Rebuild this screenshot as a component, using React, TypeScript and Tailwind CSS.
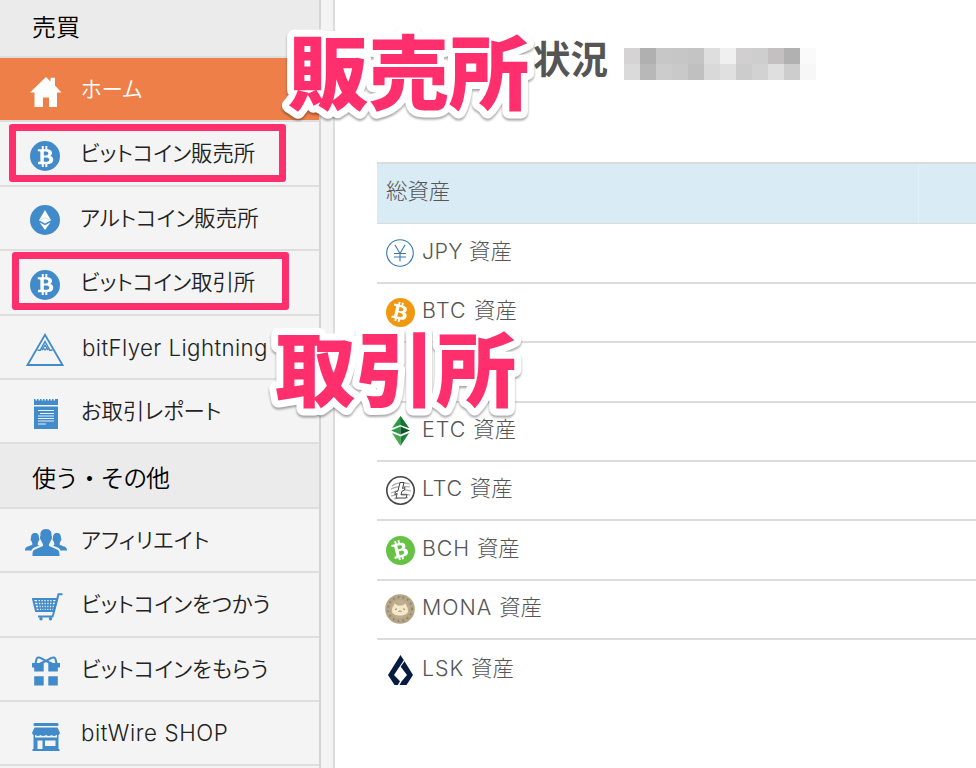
import React from 'react';
import { FaBtc } from 'react-icons/fa';

const JP = "font-['Noto_Sans_CJK_JP','Noto_Sans',sans-serif]";
const LATIN = "font-['Inter','Noto_Sans_CJK_JP',sans-serif]";

const HomeIcon = () => (
  <svg width="32" height="30" viewBox="0 0 32 30" fill="#fff" className="ml-[2px]">
    <path d="M16 0 L20.5 4.5 V0.8 H25 V8.5 L31.5 15.5 H27 V30 H19 V20.5 H13 V30 H4.500 V15.500 H0 Z" />
  </svg>
);

const BitcoinIcon = () => (
  <span className="flex size-[30px] items-center justify-center rounded-full bg-[#428bca] text-white">
    <FaBtc size={21} />
  </span>
);

const EtherIcon = () => (
  <svg width="30" height="30" viewBox="0 0 30 30">
    <circle cx="15" cy="15" r="15" fill="#428bca" />
    <path d="M15 5 L21 15.3 L15 18.600 L9 15.300 Z M9.500 17.200 L15 20.300 L20.500 17.200 L15 25 Z" fill="#fff" />
    <path d="M9.500 15 L15 12.800 L20.500 15" fill="none" stroke="#c3dbef" strokeWidth="0.8" />
  </svg>
);

const LightningIcon = () => (
  <svg width="38" height="33" viewBox="0 0 38 33" fill="none" stroke="#428bca" strokeWidth="1.8">
    <path d="M19 1.800 L36.500 32 H1.500 Z" />
    <path d="M11.500 17.200 H14.300 L19 8.500 L23.700 17.200 H26.500" strokeWidth="1.500" />
    <path d="M15.800 17 L19 12 L22.200 17 L20.300 15.500 L19 17 L17.700 15.500 Z" strokeWidth="1.200" />
  </svg>
);

const ReportIcon = () => (
  <svg width="24" height="30" viewBox="0 0 24 30" className="ml-[2px]">
    <path d="M0 0 H1.500 V1.500 H3 V0 H4.500 V1.500 H6 V0 H7.500 V1.500 H9 V0 H10.500 V1.500 H12 V0 H13.500 V1.500 H15 V0 H16.500 V1.500 H18 V0 H19.500 V1.500 H21 V0 H24 V6 H0 Z M0 7.500 H24 V30 H0 Z" fill="#428bca" />
    <path d="M4 11.500 H20 M6 14.500 H20 M4 17 H20 M4 19.500 H20 M4 22 H20 M4 25 H12" stroke="#e6f0f8" strokeWidth="1.200" />
  </svg>
);

const UsersIcon = () => (
  <svg width="42" height="27" viewBox="0 0 42 27" fill="#428bca" className="ml-px">
    <path d="M21 0 C25.500 0 27 3 26.500 7 C27.800 8 26.500 11 25.800 11.500 C25 14 23.500 15 24 17 L31 20 C34 21.200 34.500 22 34.500 27 H7.500 C7.500 22 8 21.200 11 20 L18 17 C18.500 15 17 14 16.200 11.500 C15.500 11 14.200 8 15.500 7 C15 3 16.500 0 21 0Z" />
    <path d="M10 4 C13 4 14 6 14 9 C15 10 14 12 13.500 12 C13 14 12 15 13 16 L14 16.500 C10 18.500 7 19 6.500 21.500 H0 C0 18 2 17.800 7 16 C8 15 7 14 6.500 12 C6 12 5 10 6 9 C6 6 7 4 10 4Z" />
    <path d="M32 4 C29 4 28 6 28 9 C27 10 28 12 28.500 12 C29 14 30 15 29 16 L28 16.500 C32 18.500 35 19 35.500 21.500 H42 C42 18 40 17.800 35 16 C34 15 35 14 35.500 12 C36 12 37 10 36 9 C36 6 35 4 32 4Z" />
  </svg>
);

const CartIcon = () => (
  <svg width="31" height="28" viewBox="0 0 31 28" fill="none" stroke="#428bca" className="ml-[4px]">
    <path d="M30.500 1.200 H26.500 L21.500 20.500 L20.500 23.500 H6" strokeWidth="2" />
    <path d="M1 6 H25 L21.500 18 H4 Z" strokeWidth="2" />
    <path d="M5.500 6 L7.500 18 M8.500 6 L10 18 M11.500 6 L12.200 18 M14.500 6 V18 M17.500 6 L17 18 M20.500 6 L19.500 18 M2 9 H24 M3 12 H23 M3.500 15 H22" strokeWidth="1.500" />
    <circle cx="9" cy="25.700" r="1.700" fill="#428bca" stroke="none" />
    <circle cx="18.500" cy="25.700" r="1.700" fill="#428bca" stroke="none" />
  </svg>
);

const GiftIcon = () => (
  <svg width="28" height="30" viewBox="0 0 28 30" fill="#428bca" className="ml-[2px]">
    <path d="M0 7 H28 V11.500 H25.800 V15.500 H16.300 V7 H11.700 V15.500 H2.200 V11.500 H0 Z M2.200 20.300 H11.700 V29.500 H2.200 Z M16.300 20.300 H25.800 V29.500 H16.300 Z" />
    <path d="M3.500 7.500 L4.500 3 C5 1.500 7 1 8.500 2 L14 5 L19.500 2 C21 1 23 1.500 23.500 3 L24.500 7.500 M8 7.500 L14 5 L20 7.500" fill="none" stroke="#428bca" strokeWidth="2" />
  </svg>
);

const ShopIcon = () => (
  <svg width="28" height="28" viewBox="0 0 28 28" fill="#428bca" className="ml-px mt-[2px]">
    <path d="M2.500 0 H25.500 Q26.500 0 26.500 1.500 Q26.500 3 25.500 3 H2.500 Q1.500 3 1.500 1.500 Q1.500 0 2.500 0Z" />
    <path d="M2.500 4.500 H25.500 L28 10 Q27 13 24.500 12 Q22 14 19.500 12 Q17 14 14 12 Q11 14 8.500 12 Q6 14 3.500 12 Q1 13 0 10Z" />
    <path fillRule="evenodd" d="M1.500 12 H3 V14.500 H25 V12 H26.500 V26 H27.500 V28 H.5 V26 H1.500Z M5.500 17.500 V26 H10.500 V17.500Z M13 17.500 V23 H23.500 V17.500Z" />
  </svg>
);

const YenCoin = () => (
  <svg width="28" height="28" viewBox="0 0 28 28" fill="none" stroke="#3b78b5" strokeWidth="1.100">
    <circle cx="14" cy="14" r="13.300" />
    <path d="M9 6 L14 14.500 L19 6 M14 14.500 V22.500 M8 14.500 H20 M8 18 H20" />
  </svg>
);

const EtcCoin = () => (
  <svg width="29" height="30" viewBox="0 0 29 30">
    <path d="M14.500 0 L23 12 L14.500 9 L6 12Z" fill="#2c9b45" />
    <path d="M14.500 0 L23 12 L14.500 9Z" fill="#157532" />
    <path d="M5 14.500 L14.500 10.500 V18.500Z" fill="#2c9b45" />
    <path d="M24 14.500 L14.500 10.500 V18.500Z" fill="#0b5529" />
    <path d="M6 17 L14.500 20.500 V30Z" fill="#43ab49" />
    <path d="M23 17 L14.500 20.500 V30Z" fill="#168239" />
  </svg>
);

const LtcCoin = () => (
  <svg width="29" height="29" viewBox="0 0 29 29" fill="none" stroke="#444">
    <circle cx="14.500" cy="14.500" r="13.700" strokeWidth="1.600" />
    <path d="M6 10 Q12 5 24 8 M5 13 Q12 9 24 11 M5 17 Q16 12 25 15 M5 20 Q16 17 24 19 M8 23 Q16 20 22 22" stroke="#aaa" strokeWidth="1.200" />
    <path d="M14 6.500 H18 L16.500 12.500 L19 11.500 L18.500 14 L15.800 15.500 L15 18.800 H21 L20.200 22 H10 L11.200 17.500 L8.800 18.500 L9.400 16 L12 14.800Z" fill="#fff" strokeWidth="1" />
  </svg>
);

const MonaCoin = () => (
  <svg width="30" height="30" viewBox="0 0 30 30">
    <circle cx="15" cy="15" r="14.800" fill="#b3a587" />
    <circle cx="15" cy="15" r="12" fill="none" stroke="#8f8360" strokeWidth="2" strokeDasharray="1.500 3.400" />
    <circle cx="15" cy="15" r="9.500" fill="#bdae8d" />
    <path d="M7 17 C7 13 9 12 9.500 9.500 L12.500 11.500 H17.500 L20.500 9.500 C21 12 23 13 23 17 C23 20 19 21.500 15 21.500 C11 21.500 7 20 7 17Z" fill="#f7e8ca" />
    <path d="M10 15.500 L12 14.800 M18 14.800 L20 15.500 M13.500 17.500 L15 16.800 L16.500 17.500" stroke="#8d8065" fill="none" />
  </svg>
);

const LiskCoin = () => (
  <svg width="25" height="30" viewBox="0 0 25 30" fill="#061b40">
    <path d="M12.500 0 L15.800 5.200 L6 20 L12 26.200 L9.800 30 H6.500 L0 20Z" />
    <path d="M16.500 6.300 L25 20 L18.500 30 H11.500 L13.500 26.500 L19 20 L12.700 11.800Z" />
  </svg>
);

const Coin = ({ color, tilt }: { color: string; tilt: string }) => (
  <span className={`flex size-[29px] items-center justify-center rounded-full text-white ${color}`}>
    <FaBtc size={20} className={tilt} />
  </span>
);

type Item = { icon: React.ReactNode; label: string; style?: string; active?: boolean; mark?: string };

const trade: Item[] = [
  { icon: <HomeIcon />, label: 'ホーム', style: 'text-[21.4px]', active: true },
  { icon: <BitcoinIcon />, label: 'ビットコイン販売所', style: 'text-[21.4px] -ml-px', mark: 'left-[9px] top-[2px]' },
  { icon: <EtherIcon />, label: 'アルトコイン販売所', style: 'text-[21.4px] -ml-px' },
  { icon: <BitcoinIcon />, label: 'ビットコイン取引所', style: 'text-[21.4px] -ml-px', mark: 'left-[12px] top-[1px]' },
  { icon: <LightningIcon />, label: 'bitFlyer Lightning', style: `${LATIN} text-[22.3px] tracking-[0.4px] ml-px mt-[5px]` },
  { icon: <ReportIcon />, label: 'お取引レポート', style: 'text-[21.4px]' },
];
const others: Item[] = [
  { icon: <UsersIcon />, label: 'アフィリエイト', style: 'text-[21.4px] tracking-[0.2px]' },
  { icon: <CartIcon />, label: 'ビットコインをつかう', style: 'text-[21.4px]' },
  { icon: <GiftIcon />, label: 'ビットコインをもらう', style: 'text-[21.4px]' },
  { icon: <ShopIcon />, label: 'bitWire SHOP', style: `${LATIN} text-[22.3px] tracking-[0.6px] mt-[4px]` },
];

const NavRow = ({ icon, label, style = '', active, mark }: Item) => (
  <li
    className={`relative flex h-[64.4px] shrink-0 items-center border-b-2 ${
      active ? 'border-[#ddd] bg-[#ee7f49] text-white' : 'border-[#dedede] bg-[#f4f4f4] text-[#222]'
    }`}
  >
    <span className="ml-[22px] mt-[5px] flex w-[46px] items-center justify-center">{icon}</span>
    <span className="-mt-[3px] pl-[13px]">
      <span className={`block whitespace-nowrap font-[350] leading-none [font-feature-settings:'palt'] ${style}`}>{label}</span>
    </span>
    {mark && <span className={`absolute h-[58px] w-[277px] rounded-[3px] border-[7px] border-[#ff2f6e] ${mark}`} />}
  </li>
);

const NavTitle = ({ children, style = '' }: { children: string; style?: string }) => (
  <h2 className={`flex h-[64.4px] shrink-0 items-center border-b-2 border-[#dedede] bg-[#ebebeb] pl-8 pt-[2px] text-[24px] font-[350] leading-none text-black ${style}`}>
    {children}
  </h2>
);

const assets = [
  { icon: <YenCoin />, code: 'JPY', track: 'tracking-[0.3px]' },
  { icon: <Coin color="bg-[#f09910]" tilt="rotate-[13deg]" />, code: 'BTC', track: 'tracking-[1.2px]' },
  { icon: null, code: '', track: '' },
  { icon: <EtcCoin />, code: 'ETC', track: 'tracking-[1px]' },
  { icon: <LtcCoin />, code: 'LTC', track: 'tracking-[0.8px]' },
  { icon: <Coin color="bg-[#66c244]" tilt="-rotate-[14deg]" />, code: 'BCH', track: 'tracking-[0.9px]' },
  { icon: <MonaCoin />, code: 'MONA', track: 'tracking-[1px]' },
  { icon: <LiskCoin />, code: 'LSK', track: 'tracking-[0.9px]' },
];

/* Sticker-style lettering with a rounded white outline laid over the page. */
const Callout = ({ children, place }: { children: string; place: string }) => (
  <svg width="260" height="104" className={`absolute overflow-visible [filter:drop-shadow(0_2px_1px_rgba(0,0,0,0.35))] ${place}`}>
    <text
      x="10"
      y="82"
      fontSize="80.4"
      fill="#ff2f6e"
      stroke="#fff"
      strokeWidth="14"
      strokeLinejoin="round"
      paintOrder="stroke"
      className="font-black"
    >
      {children}
    </text>
  </svg>
);

const mosaic = [
  ['#d5d3d4', '#b0b0b0', '#c7c7c7', '#c6c6c6', '#c4c4c4', '#dedede', '#f0f0f0', '#d1cfd0', '#cecece', '#c4c0c1', '#b1b1b1', '#fafafa'],
  ['#dadada', '#b8b8b8', '#cccccc', '#c9c9c9', '#c0c0c0', '#d9d9d9', '#e0e0e0', '#cccccc', '#d2d2d2', '#dfdfdf', '#cdcdcd', '#f7f7f7'],
];

export default function App() {
  return (
    <div className={`relative flex h-[768px] w-[976px] overflow-hidden bg-white ${JP}`}>
      <aside className="flex h-full w-[321px] shrink-0 flex-col border-r-2 border-[#d5d5d5] bg-[#f4f4f4]">
        <div className="-mt-[6.4px] flex flex-col">
          <NavTitle>売買</NavTitle>
          <ul>{trade.map((t, i) => <NavRow key={i} {...t} />)}</ul>
          <NavTitle style="tracking-[-1.2px]">使う・その他</NavTitle>
          <ul>{others.map((t, i) => <NavRow key={i} {...t} />)}</ul>
        </div>
      </aside>
      <div className="w-[14px] shrink-0 border-r-2 border-[#dcdcdc] bg-[#f4f4f4]" />

      <main className="min-w-0 flex-1 pl-[42px]">
        <header className="flex h-[162px] pl-[156px] pt-[37px]">
          <h1 className="text-[37.5px] font-bold leading-[40px] text-[#555]">状況</h1>
          <div className="ml-[16px] mt-[11px] h-[32px]">
            {mosaic.map((row, i) => (
              <div key={i} className="flex">
                {row.map((c, j) => <span key={j} className="size-4" style={{ backgroundColor: c }} />)}
              </div>
            ))}
          </div>
        </header>
        <section className="text-[21.4px] font-light text-[#555]">
          <div className="flex h-[62.4px] border-b border-t-2 border-[#d8dcdd] bg-[#d9ecf5]">
            <div className="w-[542px] border-r border-[#e2f0f7] pl-[9px] pt-[14px] leading-[24px]">総資産</div>
          </div>
          {assets.map((a, i) => (
            <div key={i} className={`flex h-[59.4px] items-center pl-[8px] ${i < 7 ? 'border-b-2 border-[#dcdcdc]' : ''}`}>
              <span className="flex w-[30px] justify-center">{a.icon}</span>
              {a.code && (
                <span className="-mt-[5px] ml-[7px] whitespace-pre leading-none">
                  <span className={`${LATIN} ${a.track}`}>{a.code} </span>資産
                </span>
              )}
            </div>
          ))}
        </section>
      </main>

      <Callout place="left-[278px] top-[21px]">販売所</Callout>
      <Callout place="left-[265px] top-[318px]">取引所</Callout>
    </div>
  );
}
